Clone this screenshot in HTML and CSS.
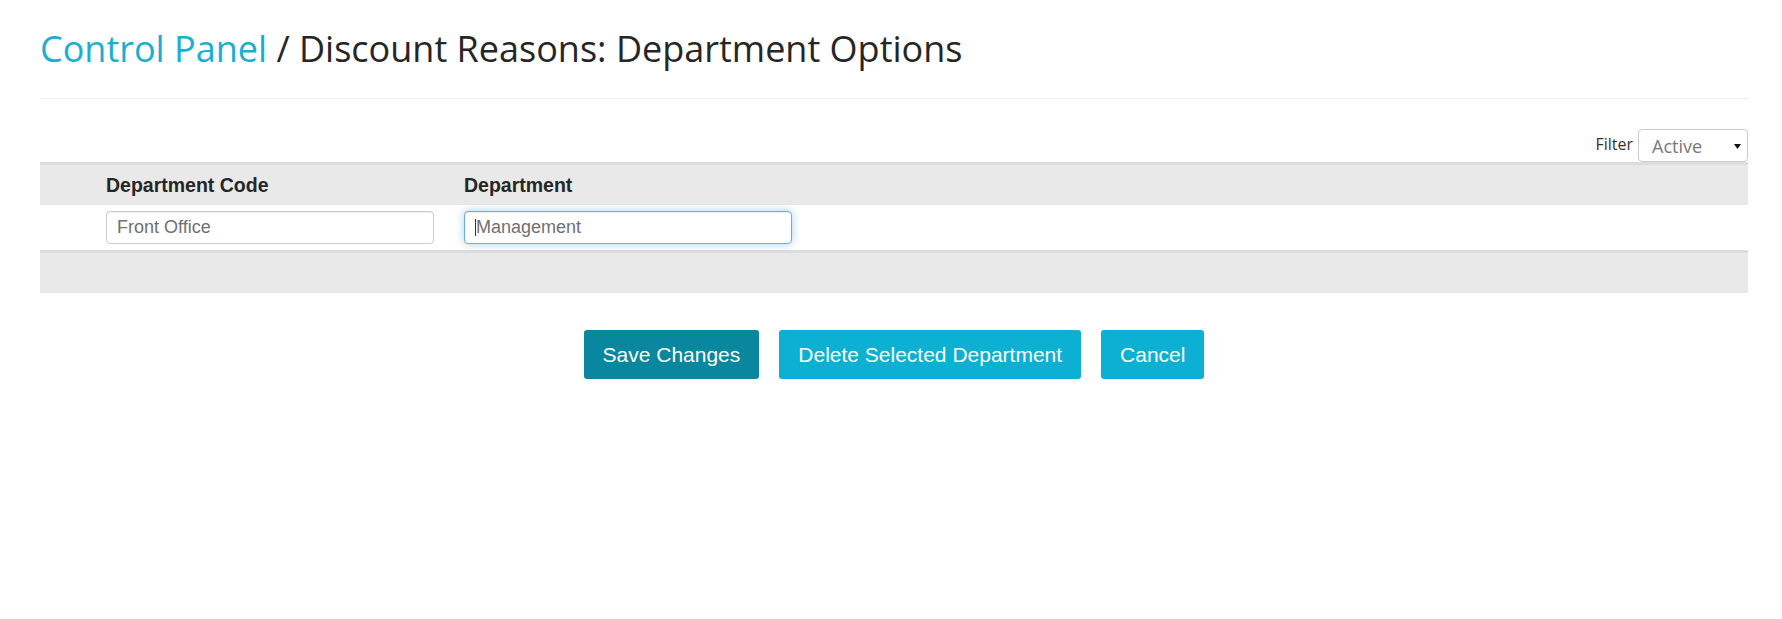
FILE: index.html
```html
<!DOCTYPE html>
<html lang="en">
<head>
<meta charset="utf-8">
<title>Discount Reasons: Department Options</title>
<link rel="stylesheet" href="styles.css">
</head>
<body>
<div class="page">
  <header class="page-header">
    <h1 class="title"><a class="crumb" href="#">Control Panel</a> / Discount Reasons: Department Options</h1>
  </header>

  <div class="toolbar">
    <span class="filter-label">Filter</span>
    <div class="select">
      <span class="select-value">Active</span>
      <svg class="select-arrow" width="7" height="5" viewBox="0 0 7 5"><path d="M0 0H7L3.5 5Z" fill="#111"/></svg>
    </div>
  </div>

  <div class="grid-table">
    <div class="grid-head">
      <div class="th">Department Code</div>
      <div class="th">Department</div>
    </div>
    <div class="grid-row">
      <div class="field">Front Office</div>
      <div class="field focused"><span class="caret"></span>Management</div>
    </div>
    <div class="grid-foot"></div>
  </div>

  <div class="actions">
    <button class="btn btn-dark">Save Changes</button>
    <button class="btn btn-info">Delete Selected Department</button>
    <button class="btn btn-info">Cancel</button>
  </div>
</div>
</body>
</html>
```
FILE: styles.css
```css
* { box-sizing: border-box; }

html, body {
  margin: 0;
  padding: 0;
  background: #ffffff;
}

body {
  font-family: "Liberation Sans", Arial, sans-serif;
  color: #333333;
}

.page {
  padding: 0 34px 0 40px;
}

.page-header {
  padding: 29px 0 29px 0;
  border-bottom: 1px solid #eeeeee;
}

.title {
  margin: 0;
  font-family: "Open Sans", sans-serif;
  font-weight: 400;
  font-size: 36px;
  line-height: 40px;
  color: #262626;
  white-space: nowrap;
}

.crumb {
  color: #1aaed0;
  text-decoration: none;
}

.toolbar {
  display: flex;
  justify-content: flex-end;
  align-items: flex-start;
  gap: 5px;
  margin-top: 30px;
}

.filter-label {
  font-family: "Open Sans", sans-serif;
  font-size: 16px;
  line-height: 22px;
  margin-top: 4px;
  color: #333333;
}

.select {
  width: 110px;
  height: 33px;
  border: 1px solid #cccccc;
  border-radius: 4px;
  display: flex;
  align-items: flex-start;
  justify-content: space-between;
  padding: 2px 6px 0 13px;
  background: #ffffff;
}

.select-value {
  font-family: "Open Sans", sans-serif;
  font-size: 18px;
  line-height: 29px;
  color: #777777;
}

.select-arrow {
  margin-top: 12px;
}

.grid-table {
  width: 100%;
}

.grid-head {
  display: grid;
  grid-template-columns: 328px 328px;
  column-gap: 30px;
  padding-left: 66px;
  border-top: 3px solid #dddddd;
  background: #e9e9e9;
  height: 43px;
}

.th {
  font-weight: 700;
  font-size: 19.5px;
  line-height: 40px;
  color: #262626;
}

.grid-row {
  display: grid;
  grid-template-columns: 328px 328px;
  column-gap: 30px;
  padding: 6px 0 6px 66px;
  height: 45px;
}

.field {
  height: 33px;
  border: 1px solid #cccccc;
  border-radius: 4px;
  padding: 0 10px;
  font-size: 18px;
  line-height: 31px;
  color: #707070;
  box-shadow: inset 0 1px 1px rgba(0, 0, 0, 0.075);
  background: #ffffff;
  white-space: nowrap;
}

.field.focused {
  border-color: #66afe9;
  box-shadow: inset 0 1px 1px rgba(0, 0, 0, 0.075), 0 0 8px rgba(102, 175, 233, 0.6);
}

.caret {
  display: inline-block;
  width: 1px;
  height: 17px;
  background: #333333;
  vertical-align: -3px;
  margin-right: 0;
}

.grid-foot {
  border-top: 3px solid #dddddd;
  background: #e9e9e9;
  height: 43px;
}

.actions {
  display: flex;
  justify-content: center;
  gap: 20px;
  margin-top: 37px;
}

.btn {
  font-family: "Liberation Sans", Arial, sans-serif;
  font-size: 21px;
  line-height: 30px;
  padding: 10px 19px 9px;
  border: 0;
  border-radius: 3px;
  color: #ffffff;
  cursor: pointer;
}

.btn-dark {
  background: #08879f;
}

.btn-info {
  background: #0cb0d3;
}
```
